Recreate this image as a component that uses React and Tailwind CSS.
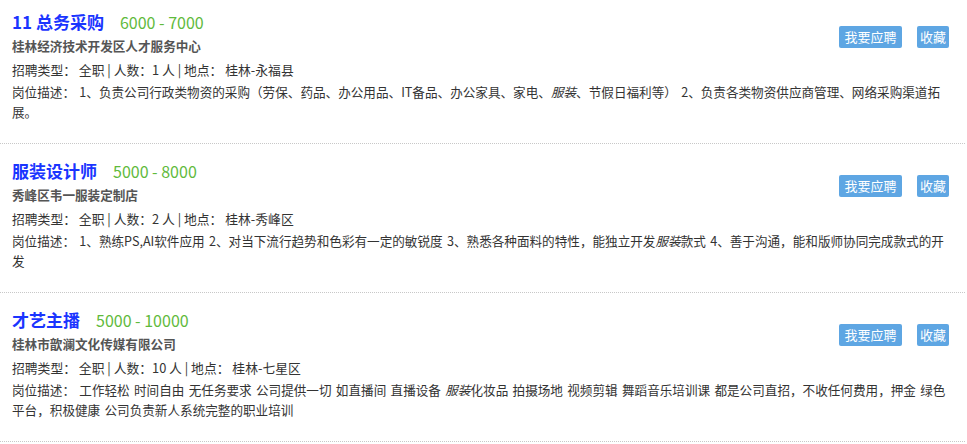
import React from "react";

const jobs = [
  {
    title: "11 总务采购",
    salary: "6000 - 7000",
    company: "桂林经济技术开发区人才服务中心",
    count: "1",
    place: "桂林-永福县",
    desc: [
      "1、负责公司行政类物资的采购（劳保、药品、办公用品、IT备品、办公家具、家电、",
      "服装",
      "、节假日福利等） 2、负责各类物资供应商管理、网络采购渠道拓展。",
    ],
    first: true,
  },
  {
    title: "服装设计师",
    salary: "5000 - 8000",
    company: "秀峰区韦一服装定制店",
    count: "2",
    place: "桂林-秀峰区",
    desc: [
      "1、熟练PS,AI软件应用 2、对当下流行趋势和色彩有一定的敏锐度 3、熟悉各种面料的特性，能独立开发",
      "服装",
      "款式 4、善于沟通，能和版师协同完成款式的开发",
    ],
  },
  {
    title: "才艺主播",
    salary: "5000 - 10000",
    company: "桂林市歆澜文化传媒有限公司",
    count: "10",
    place: "桂林-七星区",
    desc: [
      "工作轻松 时间自由 无任务要求 公司提供一切 如直播间 直播设备 ",
      "服装",
      "化妆品 拍摄场地 视频剪辑 舞蹈音乐培训课 都是公司直招，不收任何费用，押金 绿色平台，积极健康 公司负责新人系统完整的职业培训",
    ],
  },
];

function Card({ job }) {
  return (
    <div
      className={
        job.first
          ? "border-b border-dotted border-[#c8c8c8] pl-3 pr-[12px] pt-[10px] pb-[21px]"
          : "border-b border-dotted border-[#c8c8c8] pl-3 pr-[12px] pt-[15px] pb-[21px]"
      }
    >
      <div className="flex items-start">
        <div className="flex-1">
          <div className="flex items-center h-[24px]">
            <span className="text-[17px] font-bold text-[#1a35ff] leading-[24px]">
              {job.title}
            </span>
            <span className="ml-[16px] text-[16px] text-[#5fba3c] leading-[24px]">
              {job.salary}
            </span>
          </div>
          <div className="text-[12.6px] font-bold text-[#555555] leading-[24px]">
            {job.company}
          </div>
          <div className="text-[12.8px] text-[#333333] leading-[24px]">
            招聘类型： 全职 | 人数：{job.count} 人 | 地点： {job.place}
          </div>
        </div>
        <div className="flex gap-[15px] mt-[16px] mr-[4px]">
          <button className="w-[63px] h-[22px] rounded-[2px] bg-[#5ea6e3] text-white text-[13px] leading-[22px] text-center">
            我要应聘
          </button>
          <button className="w-[32px] h-[22px] rounded-[2px] bg-[#5ea6e3] text-white text-[13px] leading-[22px] text-center">
            收藏
          </button>
        </div>
      </div>
      <div className="text-[12.6px] text-[#333333] leading-[20px] [word-spacing:1.5px]">
        岗位描述： {job.desc[0]}
        <em className="italic">{job.desc[1]}</em>
        {job.desc[2]}
      </div>
    </div>
  );
}

export default function App() {
  return (
    <div
      className="w-[965px] bg-white"
      style={{ fontFamily: '"Noto Sans CJK SC", "Noto Sans", sans-serif' }}
    >
      {jobs.map((j, i) => (
        <Card key={i} job={j} />
      ))}
    </div>
  );
}
